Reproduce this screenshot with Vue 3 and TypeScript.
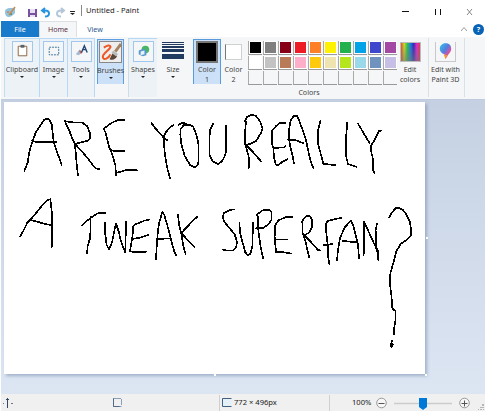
<script setup lang="ts">
interface StrokeGroup { x: number; y: number; lines: string[] }

const topColors: string[] = ['#000000', '#7f7f7f', '#880015', '#ed1c24', '#ff7f27', '#fff200', '#22b14c', '#00a2e8', '#3f48cc', '#a349a4']
const lowColors: string[] = ['#ffffff', '#c3c3c3', '#b97a57', '#ffaec9', '#ffc90e', '#efe4b0', '#b5e61d', '#99d9ea', '#7092be', '#c8bfe7']
const swatches: string[] = [...topColors, ...lowColors, ...Array<string>(10).fill('#f5f6f7')]

// Freehand brush strokes, recorded at three units per canvas pixel.
const strokes: StrokeGroup[] = [
  { x: 0, y: 96, lines: [
    '73,226 76,217 83,200 88,168 96,140 107,110 120,90 133,71 141,67 147,70 155,85 158,110 161,138 169,163 180,192 185,208',
    '94,133 104,137 125,139 150,139 168,138',
    '195,74 198,84 207,101 215,123 225,145 228,180 231,215 234,238',
    '195,76 220,79 247,80 261,90 270,112 271,127 263,134 225,144 240,160 260,183 280,209 288,217 299,220',
    '373,72 356,71 336,80 311,98 317,111 328,154 337,176 346,207 348,237',
    '330,159 340,165 374,166', '348,231 362,227 384,221 412,223',
  ] },
  { x: 140, y: 96, lines: [
    '35,82 45,96 57,109 73,127 82,133', '101,87 90,94 78,108 72,121 72,145 75,178 82,217 90,246',
    '116,86 128,80 139,84', '132,87 122,99 121,116 124,145 134,180 151,208 163,214 173,208 176,194 176,148 170,119 160,93 151,87 137,87',
    '219,84 211,100 209,118 209,177 217,195 234,205 246,196 255,179 259,165 259,88',
    '318,76 315,110 316,146 325,177 328,198 326,217', '315,75 322,62 335,56 348,60 360,76 368,97 363,111 349,134 335,142 318,147 337,166 363,196',
  ] },
  { x: 260, y: 96, lines: [
    '77,82 62,80 49,89 36,105 35,142 40,156 42,184 47,206 56,207 66,198 82,190', '40,156 72,154 77,149',
    '102,202 98,180 90,148 86,123 88,97 92,73 101,60 111,59 117,73 127,99 138,133 147,175 155,206 160,216', '83,131 108,133 131,142',
    '181,74 175,100 173,141 181,169 190,204 226,207', '262,79 258,125 258,180 264,204 290,213',
    '294,83 303,98 316,120 329,142', '365,103 356,106 346,128 333,150 334,169 339,189 340,224 344,232',
  ] },
  { x: 0, y: 190, lines: [
    '61,139 71,121 82,98 94,86 105,73 125,48 142,31 151,28 154,55 157,82 157,136 155,173', '89,90 108,94 132,101 157,106',
    '246,106 261,92 276,81 289,72 301,68 316,69', '272,81 272,117 270,145 263,169 261,190',
    '315,98 315,125 320,165 327,178 336,157 343,122 348,101 356,124 363,154 376,188 378,95',
  ] },
  { x: 120, y: 190, lines: [
    '88,89 73,92 47,103 39,109 39,126 36,147 30,183 42,187 78,185', '35,147 60,143 86,134',
    '108,207 110,172 113,131 117,101 127,66 133,75 142,106 151,141 162,182 169,196', '113,147 151,145',
    '174,74 177,102 184,130 189,164 197,193', '232,80 218,93 199,113 184,129 202,149 224,172',
  ] },
  { x: 210, y: 190, lines: [
    '74,58 59,60 42,69 38,82 43,96 60,116 74,133 81,155 78,173 69,181 54,182 38,179',
    '88,98 90,126 98,158 106,187 114,196 121,191 127,170 129,97',
    '143,78 145,121 151,166 159,204', '139,75 158,61 177,59 185,67 184,91 174,104 160,114 138,115',
    '247,81 229,81 205,91 195,107 194,140 198,186 221,187 245,191', '197,148 232,149',
    '277,97 278,129 287,157 297,201', '275,95 288,79 299,78 306,88 307,111 297,128 283,136 300,153 325,181 331,181',
  ] },
  { x: 310, y: 190, lines: [
    '94,84 75,87 52,93 47,104 49,130 53,164 55,205 58,223', '40,166 68,162',
    '81,211 84,180 90,144 105,111 123,92 130,108 137,135 144,163 147,205', '99,153 142,157',
    '161,195 162,144 162,96 175,123 187,150 201,179 205,210 204,183 198,168 197,120 201,101',
    '237,83 247,66 258,54 267,53 279,60 290,75 299,93 304,121 302,138 289,150 273,161 259,183 251,215 241,251 239,277 244,314 247,355 257,364 257,387 252,418 252,432',
    '247,451 244,459 249,463 244,471 242,462',
  ] },
]
</script>

<template>
  <main class="window">
    <header class="titlebar">
      <svg class="quick" viewBox="0 0 80 20">
        <path d="M5 12q-1-4 4-5l6 0 0 5q-5 6-9 3z" fill="#8fc3de" /><circle cx="8" cy="11" r="1" fill="#dd8252" /><circle cx="11" cy="13" r="1" fill="#408c59" /><path d="m9 14 6-8" stroke="#c68b55" stroke-width="1.5" />
        <path d="M28 8h9v8h-9z" fill="#7652a1" /><path d="M30 8h5v4h-5zm0 6h5v2h-5z" fill="#e6e1f3" />
        <path d="m45 7-3 2.5 3 2.500M42 9.500h3q4 0 4 3 0 3-4 3" fill="none" stroke="#2794df" stroke-width="2" />
        <path d="m61 7 3 2.500-3 2.500M64 9.500h-3q-4 0-4 3 0 3 4 3" fill="none" stroke="#b5c6d8" stroke-width="2" />
        <path d="M70 10h5v1h-5zm0 2h5l-2.500 2z" fill="#222" />
      </svg>
      <span class="title">Untitled - Paint</span>
      <svg class="controls" viewBox="0 0 84 20"><path d="M1 10.5h7M34.5 8v6m5-6v6" stroke="#111" /><path d="m66 8 5 6m0-6-5 6" stroke="#888" /></svg>
    </header>

    <nav class="tabs">
      <span class="tab file">File</span><span class="tab home">Home</span><span class="tab view">View</span>
      <svg class="chevron" viewBox="0 0 8 6"><path d="m1 5 3-3.500L7 5" fill="none" stroke="#999" /></svg>
      <span class="help">?</span>
    </nav>

    <section class="ribbon">
      <div class="group clipboard"><span class="tool">
        <svg viewBox="0 0 20 20"><path d="M5.500 4.500h9v10h-9z" fill="#fff" stroke="#88633e" /><path d="M8 3h4v3H8z" fill="#59616c" /></svg>
      </span><span>Clipboard</span><i class="arrow"></i></div>
      <div class="group image"><span class="tool">
        <svg viewBox="0 0 20 20"><path d="M5.500 5.500h10v8h-10z" fill="none" stroke="#36729c" stroke-dasharray="2 1" /></svg>
      </span><span>Image</span><i class="arrow"></i></div>
      <div class="group tools"><span class="tool">
        <svg viewBox="0 0 20 20"><path d="m4 13 4-5 3 3-4 3z" fill="#a2bad3" /><path d="m8 9 2 3" stroke="#d95742" stroke-width="1.500" /><path d="m10 11 3-7 3 7m-5-3h4" fill="none" stroke="#244776" stroke-width="1.500" /></svg>
      </span><span>Tools</span><i class="arrow"></i></div>
      <div class="group brushes"><span class="picture">
        <svg viewBox="0 0 22 21"><path d="M4 6q6-4 7-1c0 3-9 7-8 11 1 4 6 1 8-3" fill="none" stroke="#ed5827" stroke-width="2.200" /><path d="m16 10 6-8" stroke="#a6835e" stroke-width="3" /><path d="m10 18 3-6 5 3q-3 5-8 3" fill="#594638" /><path d="m13 10 5 4" stroke="#b9b9b9" stroke-width="3" /></svg>
      </span><span>Brushes</span><i class="arrow"></i></div>
      <div class="group shapes"><span class="tool">
        <svg viewBox="0 0 20 20"><circle cx="12" cy="8" r="4" fill="#45b663" /><path d="m5 9 5-2 3 2v5l-4 1-4-2z" fill="#5597cf" /><path d="m7 10 4-1v4l-4 1z" fill="#e9f2fa" /></svg>
      </span><span>Shapes</span><i class="arrow"></i></div>
      <div class="group size"><span class="lines"><b></b><b></b><b></b><b></b><b></b></span><span>Size</span><i class="arrow"></i></div>
      <div class="group color-one"><span class="active-color"></span><span>Color</span><span>1</span></div>
      <div class="group color-two"><span class="second-color"></span><span>Color</span><span>2</span></div>
      <div class="palette-group">
        <div class="palette"><span v-for="(color, index) in swatches" :key="index" class="swatch" :class="{ blank: index > 19 }"><i :style="{ background: color }"></i></span></div>
        <span class="palette-label">Colors</span>
      </div>
      <div class="group edit"><span class="spectrum"></span><span>Edit</span><span>colors</span></div>
      <div class="group three-d"><span class="tool">
        <svg viewBox="0 0 20 20">
          <defs><linearGradient id="drop" x1="0" y1="0" x2="1" y2="1"><stop stop-color="#30c5ed" /><stop offset=".45" stop-color="#557ddd" /><stop offset=".7" stop-color="#df519e" /><stop offset="1" stop-color="#f5a335" /></linearGradient></defs>
          <path d="M4 7c0-7 12-8 12 0 0 4-3 5-4 8l-2 3-1-5C6 12 4 10 4 7" fill="url(#drop)" /><path d="m8 13 4 1-2 4z" fill="#f39a32" />
        </svg>
      </span><span>Edit with</span><span>Paint 3D</span></div>
    </section>

    <section class="workspace">
      <div class="canvas">
        <svg class="drawing" viewBox="4 102 421 272">
          <g v-for="(group, index) in strokes" :key="index" :transform="`translate(${group.x} ${group.y}) scale(.333333)`">
            <polyline v-for="line in group.lines" :key="line" :points="line" />
          </g>
        </svg>
        <i class="handle right"></i><i class="handle bottom"></i><i class="handle corner"></i>
      </div>
    </section>

    <footer class="status">
      <div class="cursor"><svg viewBox="0 0 12 12"><path d="M6.500 1v10M5 2.500h3" stroke="#334961" /><path d="M2 6.500h1m7 0h2" stroke="#777" /></svg></div>
      <div class="selection"><svg viewBox="0 0 12 12"><path d="M2.500 1.500v8h8M10.500 2v6M2 1.500h8" fill="none" stroke="#8ba0b8" /><path d="M2.500 1.500v8h6" fill="none" stroke="#506b8a" /></svg></div>
      <div class="dimensions"><svg viewBox="0 0 12 12"><path d="M1.500 1.500h9v8h-9z" fill="#e5f1f8" /><path d="M10.500 1.500h-9v8h9" fill="none" stroke="#42617f" /></svg><span>772 × 496px</span></div>
      <div class="zoom"><span class="percent">100%</span>
        <svg class="zoom-control" viewBox="0 0 94 14">
          <g fill="#f7f7f7" stroke="#999"><circle cx="5.500" cy="7" r="4.800" /><circle cx="88.500" cy="7" r="4.800" /></g>
          <path d="M2.500 7.500h6m77 0h6m-3-3v6" stroke="#555" /><path d="M18 7.500h58" stroke="#ccc" stroke-width="1.500" /><path d="M43 2h8v9l-4 3-4-3z" fill="#0078d7" />
        </svg>
        <svg class="grip" viewBox="0 0 7 7"><path d="M4 0h2v2H4zM2 3h2v1H2zm2 0h2v1H4zM0 5h1v1H0zm2 0h2v1H2zm3 0h1v1H5z" fill="#b5b5b5" /></svg>
      </div>
    </footer>
  </main>
</template>

<style>
body { background: #fff; overflow: hidden; }
</style>
<style scoped>
* { box-sizing: border-box; }
svg { display: block; }
.window { width: 484px; height: 411px; margin-left: 1px; font: 7.1px/9px "Noto Sans", "Open Sans", sans-serif; color: #444; background: #fff; display: flex; flex-direction: column; }
.titlebar { height: 21px; display: flex; align-items: center; }
.quick { width: 80px; height: 20px; flex: none; margin-left: -1px; }
.title { margin-left: 1px; border-left: 1px solid #888; padding-left: 4px; font-size: 7.6px; line-height: 11px; color: #222; }
.controls { width: 84px; height: 20px; margin-left: auto; }
.tabs { height: 16px; display: flex; align-items: center; line-height: 16px; }
.tab { height: 16px; text-align: center; }
.file { width: 38px; background: #1979ca; color: #fff; }
.home { width: 38px; background: #f5f6f7; border: 1px solid #dddfe2; border-bottom: 0; color: #593047; line-height: 15px; }
.view { width: 36px; color: #2b5b91; }
.chevron { width: 8px; height: 6px; margin-left: auto; }
.help { width: 11px; height: 11px; margin: 0 1px 0 5px; border-radius: 50%; background: #0862b5; color: #fff; line-height: 11px; text-align: center; font-weight: bold; }
.ribbon { height: 62px; padding-top: 1px; background: #f5f6f7; display: flex; }
.group { height: 59px; display: flex; flex-direction: column; align-items: center; padding-top: 3px; flex: none; white-space: nowrap; }
.group > span:not(:first-child) { line-height: 9px; margin-top: 1px; }
.tool + span { padding-top: 2px; }
.clipboard { width: 35px; margin-left: 3px; border-left: 1px solid #c1ddf3; border-top: 1px solid #c1ddf3; padding-top: 2px; background: #edf2f7; }
.image, .tools { width: 28px; border-left: 1px solid #b5d9f6; border-top: 1px solid #b5d9f6; padding-top: 2px; background: #edf2f7; }
.tools { border-right: 1px solid #b5d9f6; }
.tool { width: 21px; height: 21px; border: 1px solid #a0c8ef; background: #f5f6f7; flex: none; }
.tool svg { width: 19px; height: 19px; }
.arrow { width: 0; height: 0; border: 2px solid transparent; border-top-color: #222; border-bottom: 0; margin-top: 2px; }
.brushes { width: 27px; height: 45px; margin: 1px 0 0 2px; padding: 1px 0 0; border: 1px solid #5d9fe1; border-bottom: 0; background: #cce1f7; }
.picture { width: 23px; height: 22px; border: 1px solid #888; background: #eee; flex: none; }
.picture svg { width: 21px; height: 20px; }
.picture + span { padding-top: 2px; }
.shapes { width: 29px; margin-left: 4px; border-top: 1px solid #b5d9f6; border-left: 1px solid #cbdceb; padding-top: 2px; background: #edf2f7; }
.size { width: 32px; }
.lines { width: 22px; height: 19px; margin-top: 1px; display: flex; flex-direction: column; flex: none; gap: 2px; }
.lines b { background: #203a60; height: 1px; }
.lines b:nth-child(2) { margin-top: -1px; }
.lines b:nth-child(3) { height: 2px; margin-top: -1px; } .lines b:nth-child(4) { height: 3px; margin-top: -1px; } .lines b:nth-child(5) { height: 5px; }
.size > span:nth-child(2) { padding-top: 3px; }
.color-one { width: 28px; height: 45px; border: 1px solid #579bdc; border-bottom: 0; margin: 1px 0 0 4px; padding-top: 1px; background: #cce1f7; }
.active-color { width: 22px; height: 22px; background: #000; border: 2px solid #777; flex: none; }
.active-color + span { padding-top: 1px; }
.color-two { width: 25px; padding-top: 6px; }
.second-color { width: 17px; height: 16px; border: 1px solid #d0d0d0; border-left-color: #777; background: #fff; flex: none; }
.color-two > .second-color + span { margin-top: 5px; }
.palette-group { width: 150px; padding: 3px 0 0 2px; text-align: center; flex: none; }
.palette { display: grid; grid-template-columns: repeat(10, 14px); grid-auto-rows: 14px; column-gap: 1px; row-gap: 1px; }
.swatch { border-left: 1px solid #aaa; border-bottom: 1px solid #999; padding: 1px; background: #fff; }
.swatch i { display: block; width: 100%; height: 100%; }
.blank { background: #f5f6f7; }
.palette-label { display: block; margin: 3px 26px 0 0; }
.edit { width: 32px; padding: 4px 4px 0 0; }
.spectrum { width: 21px; height: 20px; border: 1px solid #bbb; background: linear-gradient(transparent, #7779), linear-gradient(90deg, #ed4329, #d0dc21, #26c251, #167edf, #3823b7, #e12ad4, #e93640); flex: none; }
.edit .spectrum + span, .three-d .tool + span { padding-top: 2px; }
.three-d { width: 37px; padding: 4px 2px 0 0; border-left: 1px solid #dce0e5; border-right: 1px solid #dce0e5; }
.three-d .tool { height: 20px; border-color: #c8c8c8; border-top: 0; }
.workspace { height: 295px; border-top: 1px solid #bfccdf; background: linear-gradient(#c5d0e2, #dce6f3); padding: 2px 0 0 3px; }
.canvas { position: relative; width: 421px; height: 272px; background: #fff; box-shadow: 2px 2px 3px #7185aa88; }
.drawing { width: 421px; height: 272px; }
.drawing polyline { fill: none; stroke: #000; stroke-width: 5; stroke-linecap: round; stroke-linejoin: round; shape-rendering: crispEdges; }
.handle { position: absolute; width: 2px; height: 2px; background: #fff; }
.right { left: 422px; top: 135px; } .bottom { left: 210px; top: 272px; } .corner { left: 421px; top: 272px; }
.status { height: 17px; display: flex; align-items: center; background: #f0f0f0; color: #222; font-size: 7.6px; }
.status svg { flex: none; width: 12px; height: 12px; }
.cursor { width: 110px; }
.selection { width: 108px; }
.dimensions { height: 16px; width: 110px; display: flex; align-items: center; border-left: 1px solid #d0d0d0; padding-left: 1px; gap: 1px; }
.zoom { width: 156px; height: 16px; display: flex; align-items: center; border-left: 1px solid #d0d0d0; padding-left: 22px; position: relative; }
.percent { width: 24px; }
.status .zoom-control { width: 94px; height: 14px; }
.status .grip { position: absolute; right: 0; bottom: 0; width: 7px; height: 7px; }
</style>
